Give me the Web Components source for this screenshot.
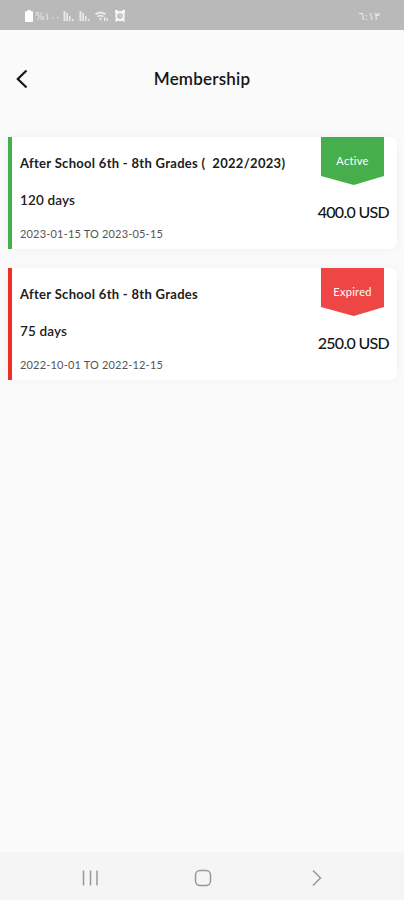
<!DOCTYPE html>
<html lang="en">
<head>
<meta charset="utf-8">
<meta name="viewport" content="width=device-width, initial-scale=1">
<title>Membership</title>
<style>
body {
    margin: 0;
    background: #fafafa;
    font-family: Lato, "Liberation Sans", sans-serif;
}
</style>
</head>
<body>
<membership-app></membership-app>
<script>
class BaseElement extends HTMLElement {

    constructor() {
        super();
        this.attachShadow({ mode: 'open' });
        this.shadowRoot.append(this.constructor.template.content.cloneNode(true));
    }

}

function createTemplate(html) {
    const template = document.createElement('template');
    template.innerHTML = html;
    return template;
}

class StatusBar extends BaseElement {

    static template = createTemplate(`
<style>
:host {
    display: flex;
    align-items: center;
    justify-content: space-between;
    box-sizing: border-box;
    height: 30px;
    padding: 2px 24px 0 25px;
    background: #b9b9b9;
    color: #e9e9e9;
    font: 11px "DejaVu Sans", sans-serif;
}
.icons {
    display: flex;
    align-items: center;
}
svg {
    display: block;
    fill: currentColor;
}
.level {
    width: 24px;
    margin: 0 4px 0 2px;
    font-size: 10px;
    letter-spacing: -0.6px;
    white-space: nowrap;
}
.signal {
    margin-right: 5px;
}
.wifi {
    margin-right: 5px;
}
</style>
<div class="icons">
<svg width="8" height="12" viewBox="0 0 8 12"><path fill="#fff" d="M2.5 0h3v1.200H7q1 0 1 1V11q0 1-1 1H1q-1 0-1-1V2.200q0-1 1-1h1.500z"/></svg>
<span class="level">%١٠٠</span>
<svg class="signal" width="11" height="12" viewBox="0 0 11 12"><path d="M.5 1h2v10h-2zM3.300 3H5v8H3.300zM6 6h1.500v5H6zM9 9h1.500v2H9z"/></svg>
<svg class="signal" width="11" height="12" viewBox="0 0 11 12"><path d="M.5 1h2v10h-2zM3.300 3H5v8H3.300zM6 6h1.500v5H6zM9 9h1.500v2H9z"/></svg>
<svg class="wifi" width="14" height="12" viewBox="0 0 14 12"><path d="M0 3.500Q5.500-.5 11 3.500L10 5Q5.500 2 1 5zM2 6q3.500-2.500 7 0L8 7.300q-2.500-1.600-5 0zM4 8.500q1.500-1 3 0L5.500 11zM9 7h1.300v4H9zM11.500 8h1.300v3h-1.300z"/></svg>
<svg width="12" height="12" viewBox="0 0 12 12"><path fill="#f6f6f6" d="M1 0h3v1.300Q6 .7 8 1.300V0h3v3l-.7.500q1 2.500 0 5l.7 3H9l-.6-.9Q6 11.700 3.600 10.600L3 11.500H1l.7-3q-1-2.500 0-5L1 3z"/><circle cx="6" cy="6" r="2.800" fill="#b9b9b9"/><path d="M5.500 4h1v1.700h1.300v1H5.500z"/></svg>
</div>
<span>٦:١٣</span>
`);

}

class PageHeader extends BaseElement {

    static template = createTemplate(`
<style>
:host {
    display: grid;
    grid-template-columns: 40px 1fr 40px;
    align-items: center;
    height: 96px;
}
svg {
    display: block;
    margin: 1px 0 0 16px;
}
h1 {
    margin: 1px 0 0;
    color: #161616;
    font-size: 17px;
    font-weight: 600;
    letter-spacing: 0.2px;
    line-height: 24px;
    text-align: center;
}
</style>
<svg width="13" height="20" viewBox="0 0 13 20"><path d="M10.500 1.500L1.800 10l8.700 8.500" fill="none" stroke="#161616" stroke-width="2.200"/></svg>
<h1><slot></slot></h1>
`);

}

class MembershipCard extends BaseElement {

    static template = createTemplate(`
<style>
:host {
    --accent: #46af4c;
    --ribbon: #46af4c;
    display: flex;
    justify-content: space-between;
    box-sizing: border-box;
    height: 112px;
    padding: 0 8px 0 8px;
    border-left: 4px solid var(--accent);
    border-radius: 0 7px 7px 0;
    background: #fff;
    box-shadow: 0 0 9px rgba(0, 0, 0, 0.045);
    color: #202020;
    white-space: nowrap;
}
:host([status="expired"]) {
    --accent: #ee3024;
    --ribbon: #ee4644;
}
.details {
    display: flex;
    flex-direction: column;
}
.name {
    margin-top: 16px;
    font-size: 13px;
    font-weight: 700;
    line-height: 20px;
    letter-spacing: 0.3px;
    white-space: pre;
}
.days {
    margin-top: 17px;
    font-size: 13.5px;
    font-weight: 600;
    line-height: 20px;
    letter-spacing: 0.150px;
}
.period {
    margin-top: 16px;
    color: #555;
    font-size: 11px;
    line-height: 16px;
    letter-spacing: 0.180px;
}
.side {
    display: flex;
    flex-direction: column;
    align-items: flex-end;
}
.ribbon {
    width: 63px;
    height: 48px;
    margin-right: 5px;
    background: var(--ribbon);
    clip-path: polygon(0 0, 100% 0, 100% 81%, 52% 100%, 0 81%);
    color: #fff;
    font-size: 11px;
    line-height: 47px;
    letter-spacing: 0.3px;
    text-align: center;
}
.price {
    margin-top: 17px;
    color: #161616;
    font-size: 16px;
    font-weight: 500;
    line-height: 20px;
    letter-spacing: -0.7px;
}
</style>
<div class="details">
<div class="name"><slot name="name"></slot></div>
<div class="days"><slot name="days"></slot></div>
<div class="period"><slot name="period"></slot></div>
</div>
<div class="side">
<div class="ribbon"><slot name="status"></slot></div>
<div class="price"><slot name="price"></slot></div>
</div>
`);

}

class NavigationBar extends BaseElement {

    static template = createTemplate(`
<style>
:host {
    display: flex;
    align-items: center;
    justify-content: space-between;
    box-sizing: border-box;
    height: 48px;
    padding: 4px 81px 0 81px;
    background: #f5f5f5;
}
svg {
    display: block;
    fill: none;
    stroke: #999;
    stroke-width: 1.500;
}
.home {
    margin-right: 4px;
}
</style>
<svg width="18" height="18" viewBox="0 0 18 18"><path d="M2.500 1.500v15M9.500 1.500v15M16 1.500v15"/></svg>
<svg class="home" width="18" height="18" viewBox="0 0 18 18"><rect x="1.500" y="1.500" width="15" height="15" rx="4.500"/></svg>
<svg width="12" height="18" viewBox="0 0 12 18"><path d="M2 1.500L9.500 9 2 16.500"/></svg>
`);

}

class MembershipApp extends BaseElement {

    static template = createTemplate(`
<style>
:host {
    display: flex;
    flex-direction: column;
    height: 100vh;
}
main {
    display: flex;
    flex: 1;
    flex-direction: column;
    gap: 19px;
    padding: 11px 7px 0 8px;
}
</style>
<status-bar></status-bar>
<page-header>Membership</page-header>
<main>
<membership-card status="active">
<span slot="name">After School 6th - 8th Grades (  2022/2023)</span>
<span slot="days">120 days</span>
<span slot="period">2023-01-15 TO 2023-05-15</span>
<span slot="status">Active</span>
<span slot="price">400.0 USD</span>
</membership-card>
<membership-card status="expired">
<span slot="name">After School 6th - 8th Grades</span>
<span slot="days">75 days</span>
<span slot="period">2022-10-01 TO 2022-12-15</span>
<span slot="status">Expired</span>
<span slot="price">250.0 USD</span>
</membership-card>
</main>
<navigation-bar></navigation-bar>
`);

}

customElements.define('status-bar', StatusBar);
customElements.define('page-header', PageHeader);
customElements.define('membership-card', MembershipCard);
customElements.define('navigation-bar', NavigationBar);
customElements.define('membership-app', MembershipApp);
</script>
</body>
</html>
